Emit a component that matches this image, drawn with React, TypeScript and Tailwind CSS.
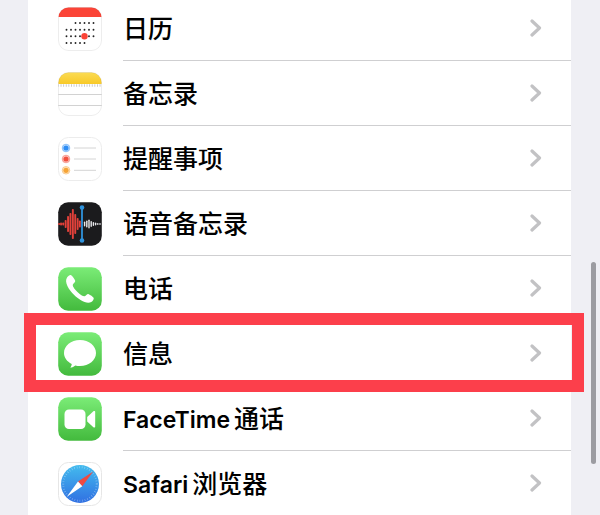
import React from "react";

const ICON = "block size-11 shrink-0";

const CalendarIcon = () => (
  <svg viewBox="0 0 44 44" className={ICON} aria-hidden="true">
    <clipPath id="calendar-clip">
      <rect x="0.5" y="0.5" width="43" height="43" rx="10" />
    </clipPath>
    <g clipPath="url(#calendar-clip)">
      <rect width="44" height="44" fill="#fff" />
      <rect width="44" height="10" fill="#fb4437" />
    </g>
    <rect x="0.5" y="0.5" width="43" height="43" rx="10" fill="none" stroke="#000" strokeOpacity="0.07" />
    {[
      { y: 16, from: 2, to: 6 },
      { y: 22.7, from: 0, to: 6 },
      { y: 29.3, from: 0, to: 6 },
      { y: 36, from: 0, to: 4 },
    ].map((line) =>
      Array.from({ length: line.to - line.from + 1 }, (_, i) => (
        <circle key={`${line.y}-${i}`} cx={8.5 + (line.from + i) * 4.5} cy={line.y} r="0.95" fill="#222" />
      ))
    )}
    <circle cx="26.5" cy="29.3" r="3.2" fill="#fb4437" />
  </svg>
);

const NotesIcon = () => (
  <svg viewBox="0 0 44 44" className={ICON} aria-hidden="true">
    <defs>
      <linearGradient id="notes-top" x1="0" y1="0" x2="0" y2="1">
        <stop offset="0" stopColor="#fbdc55" />
        <stop offset="1" stopColor="#f8c928" />
      </linearGradient>
      <clipPath id="notes-clip">
        <rect x="0.5" y="0.5" width="43" height="43" rx="10" />
      </clipPath>
    </defs>
    <g clipPath="url(#notes-clip)">
      <rect width="44" height="44" fill="#fff" />
      <rect width="44" height="12" fill="url(#notes-top)" />
      <path d="M0 13.5H44" stroke="#c4c4c4" strokeWidth="2.4" strokeDasharray="0.9 1.7" />
      <path d="M0 22.5H44M0 33.5H44" stroke="#d2d2d2" />
    </g>
    <rect x="0.5" y="0.5" width="43" height="43" rx="10" fill="none" stroke="#000" strokeOpacity="0.07" />
  </svg>
);

const RemindersIcon = () => (
  <svg viewBox="0 0 44 44" className={ICON} aria-hidden="true">
    <rect x="0.5" y="0.5" width="43" height="43" rx="10" fill="#fff" stroke="#ececec" />
    {[
      { y: 11, color: "#2d8df5" },
      { y: 22, color: "#f2503f" },
      { y: 33.3, color: "#f6a436" },
    ].map((item) => (
      <g key={item.y}>
        <circle cx="8" cy={item.y} r="3.8" fill={item.color} fillOpacity="0.25" stroke={item.color} strokeOpacity="0.6" strokeWidth="0.8" />
        <circle cx="8" cy={item.y} r="2.6" fill={item.color} />
        <path d={`M16 ${item.y}H38`} stroke="#d4d4d4" />
      </g>
    ))}
  </svg>
);

const redBars = [
  { x: 1, h: 2 },
  { x: 3, h: 3 },
  { x: 5.2, h: 3 },
  { x: 7.6, h: 8 },
  { x: 10, h: 16 },
  { x: 12.4, h: 22 },
  { x: 14.8, h: 30 },
  { x: 17.2, h: 20 },
  { x: 19.6, h: 12 },
  { x: 21.8, h: 7 },
];

const whiteBars = [
  { x: 26.6, h: 5 },
  { x: 28.8, h: 7 },
  { x: 31, h: 9 },
  { x: 33.2, h: 6 },
  { x: 35.4, h: 4 },
  { x: 37.6, h: 3 },
  { x: 39.8, h: 2 },
  { x: 42, h: 2 },
];

const VoiceMemosIcon = () => (
  <svg viewBox="0 0 44 44" className={ICON} aria-hidden="true">
    <rect x="0.2" y="0.2" width="43.6" height="43.6" rx="10" fill="#1b1b1d" />
    {redBars.map((bar) => (
      <rect key={bar.x} x={bar.x - 0.9} y={22 - bar.h / 2} width="1.9" height={bar.h} rx="0.8" fill="#e2413a" />
    ))}
    {whiteBars.map((bar) => (
      <rect key={bar.x} x={bar.x - 0.7} y={22 - bar.h / 2} width="1.4" height={bar.h} rx="0.7" fill="#e9e9ec" />
    ))}
    <path d="M24 5V39" stroke="#2f93dc" strokeWidth="1.8" />
    <circle cx="24" cy="5.5" r="2.3" fill="#2f93dc" />
    <circle cx="24" cy="38.5" r="2.3" fill="#2f93dc" />
  </svg>
);

const GreenTile = ({ id, children }: { id: string; children: React.ReactNode }) => (
  <svg viewBox="0 0 44 44" className={ICON} aria-hidden="true">
    <defs>
      <linearGradient id={id} x1="0" y1="0" x2="0" y2="1">
        <stop offset="0" stopColor="#7bec77" />
        <stop offset="1" stopColor="#43ba3d" />
      </linearGradient>
    </defs>
    <rect x="0.2" y="0.2" width="43.6" height="43.6" rx="10" fill={`url(#${id})`} />
    {children}
  </svg>
);

const PhoneIcon = () => (
  <GreenTile id="phone-green">
    <path
      d="M9.2 10.3C10.3 8.9 12 7.6 13.2 8.3C14.6 9.2 16.6 12.3 17.1 13.6C17.7 15.4 15.2 16.3 14.8 17.8C14.4 19.6 17.4 23.2 20 25.5C22.4 27.6 24.9 29.5 26.6 29.3C28.1 29 29 26.6 30.7 27.2C32.2 27.8 35 29.7 35.6 30.8C36.3 32.1 34.7 34.2 33.3 35C28.6 37.6 21 32.8 16.2 28.1C11 23 5.7 14.9 9.2 10.3Z"
      fill="#fff"
    />
  </GreenTile>
);

const MessagesIcon = () => (
  <GreenTile id="messages-green">
    <path
      d="M22 8C31 8 38 13.7 38 21C38 28.3 31 34 22 34C20.3 34 18.8 33.8 17.3 33.4C15.9 34.7 14 35.6 12.2 35.5C13.2 34.4 13.7 33.1 13.7 31.9C9 29.6 6 25.6 6 21C6 13.7 13 8 22 8Z"
      fill="#fff"
    />
  </GreenTile>
);

const FaceTimeIcon = () => (
  <GreenTile id="facetime-green">
    <rect x="6.5" y="12.5" width="21" height="19.5" rx="4.5" fill="#fff" />
    <path d="M29.2 20L35.4 14.3C36.2 13.6 37.2 14 37.2 15V29.5C37.2 30.5 36.2 30.9 35.4 30.2L29.2 24.6Z" fill="#fff" />
  </GreenTile>
);

const SafariIcon = () => (
  <svg viewBox="0 0 44 44" className={ICON} aria-hidden="true">
    <defs>
      <linearGradient id="safari-blue" x1="0" y1="0" x2="0" y2="1">
        <stop offset="0" stopColor="#43bbee" />
        <stop offset="1" stopColor="#3070e2" />
      </linearGradient>
    </defs>
    <rect x="0.5" y="0.5" width="43" height="43" rx="10" fill="#fff" stroke="#e6e6e6" />
    <circle cx="22" cy="22" r="19" fill="url(#safari-blue)" />
    <circle cx="22" cy="22" r="16.8" fill="none" stroke="#fff" strokeOpacity="0.4" strokeWidth="2" strokeDasharray="0.6 2" />
    <path d="M35.2 9.6L20 19.6L24.3 24.2Z" fill="#f04a41" />
    <path d="M8.8 34.8L20 19.6L24.3 24.2Z" fill="#fff" />
  </svg>
);

const Chevron = () => (
  <svg viewBox="0 0 12 18" className="block h-[18px] w-3 shrink-0" aria-hidden="true">
    <path d="M2 2L9.5 9L2 16" fill="none" stroke="#c2c2c4" strokeWidth="3.2" strokeLinecap="round" strokeLinejoin="round" />
  </svg>
);

const apps = [
  { latin: "", name: "日历", Icon: CalendarIcon },
  { latin: "", name: "备忘录", Icon: NotesIcon },
  { latin: "", name: "提醒事项", Icon: RemindersIcon },
  { latin: "", name: "语音备忘录", Icon: VoiceMemosIcon },
  { latin: "", name: "电话", Icon: PhoneIcon },
  { latin: "", name: "信息", Icon: MessagesIcon, highlighted: true },
  { latin: "FaceTime", name: "通话", Icon: FaceTimeIcon },
  { latin: "Safari", name: "浏览器", Icon: SafariIcon },
];

const App = () => {
  return (
    <main
      lang="zh-CN"
      className="relative h-screen overflow-hidden bg-[#efeff4] pl-7 pr-[29px] font-['Inter','Noto_Sans_CJK_SC',sans-serif]"
    >
      {/* Settings list, scrolled part way through the first row */}
      <ul className="-mt-1 min-h-full bg-white">
        {apps.map(({ latin, name, Icon, highlighted }) => (
          <li key={name} className="relative">
            <button type="button" className="flex h-[65px] w-full items-stretch gap-[21px] pl-[30px] text-left">
              <span className="flex items-center">
                <Icon />
              </span>
              <span className="flex grow items-center justify-between border-b border-[#cfcfd1] pr-[29px]">
                <span className="pt-0.5 text-[25px] leading-8 font-medium text-black">
                  {latin && <span className="mr-1 text-[23px] leading-8 font-semibold">{latin}</span>}
                  {name}
                </span>
                <Chevron />
              </span>
            </button>
            {highlighted && (
              <div className="pointer-events-none absolute -top-2 -right-[13px] -bottom-1.5 -left-1 z-10 border-12 border-[#fc3f4b]" />
            )}
          </li>
        ))}
      </ul>

      {/* Scroll indicator */}
      <div className="absolute top-[262px] right-1 h-[202px] w-[5px] rounded-full bg-[#9c9ca1]" />
    </main>
  );
};

export default App;
